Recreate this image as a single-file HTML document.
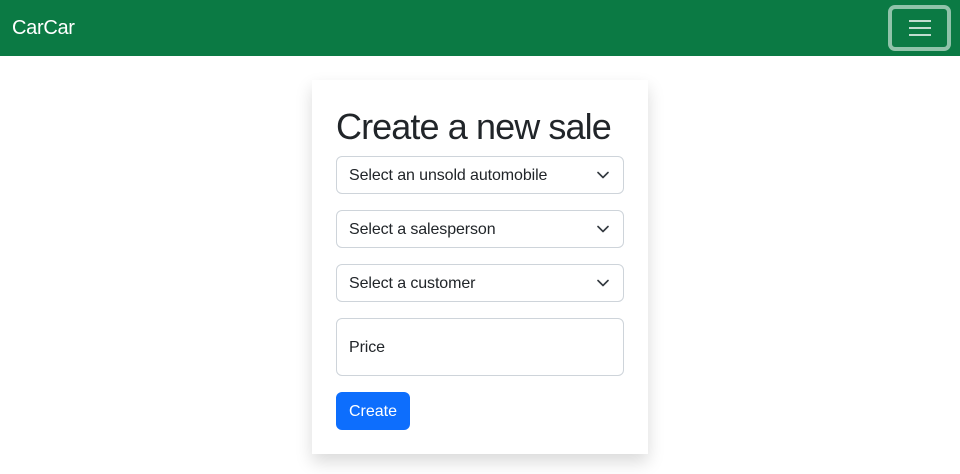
<!DOCTYPE html>
<html><head><style>
*{box-sizing:border-box;margin:0;padding:0}
body{width:960px;height:474px;background:#fff;font-family:"Liberation Sans",Arial,sans-serif;color:#212529;overflow:hidden;position:relative}
.nav{height:56px;background:#0b7a44;position:relative}
.brand{position:absolute;left:12px;top:14px;color:#fff;font-size:20px;line-height:28px;letter-spacing:-0.3px}
.tog{position:absolute;left:888px;top:5px;width:63px;height:46px;border:4px solid rgba(255,255,255,.55);border-radius:7px}
.tog i{position:absolute;left:17px;width:22px;height:2px;background:rgba(255,255,255,.75)}
.card{position:absolute;left:312px;top:80px;width:336px;height:374px;background:#fff;box-shadow:0 .5rem 1rem rgba(0,0,0,.15)}
h1{position:absolute;left:24px;top:25px;font-size:36px;font-weight:500;line-height:44px;color:#212529;letter-spacing:-0.9px;white-space:nowrap}
.sel{position:absolute;left:24px;width:288px;height:38px;border:1px solid #ced4da;border-radius:6px;font-size:16px;line-height:38px;padding-left:12px;letter-spacing:-0.1px}
.sel svg{position:absolute;right:14px;top:13px}
.btn{position:absolute;left:24px;top:312px;width:74px;height:38px;background:#0d6efd;color:#fff;border-radius:6px;font-size:16px;line-height:40px;text-align:center}
</style></head><body>
<div class="nav"><div class="brand">CarCar</div><div class="tog"><i style="top:11px"></i><i style="top:18px"></i><i style="top:25px"></i></div></div>
<div class="card">
<h1>Create a new sale</h1>
<div class="sel" style="top:76px">Select an unsold automobile<svg width="12" height="10" viewBox="0 0 12 10"><path d="M1 2.5l5 5 5-5" fill="none" stroke="#343a40" stroke-width="1.6" stroke-linecap="round" stroke-linejoin="round"/></svg></div>
<div class="sel" style="top:130px">Select a salesperson<svg width="12" height="10" viewBox="0 0 12 10"><path d="M1 2.5l5 5 5-5" fill="none" stroke="#343a40" stroke-width="1.6" stroke-linecap="round" stroke-linejoin="round"/></svg></div>
<div class="sel" style="top:184px">Select a customer<svg width="12" height="10" viewBox="0 0 12 10"><path d="M1 2.5l5 5 5-5" fill="none" stroke="#343a40" stroke-width="1.6" stroke-linecap="round" stroke-linejoin="round"/></svg></div>
<div class="sel" style="top:238px;height:58px;line-height:58px">Price</div>
<div class="btn">Create</div>
</div>
</body></html>
